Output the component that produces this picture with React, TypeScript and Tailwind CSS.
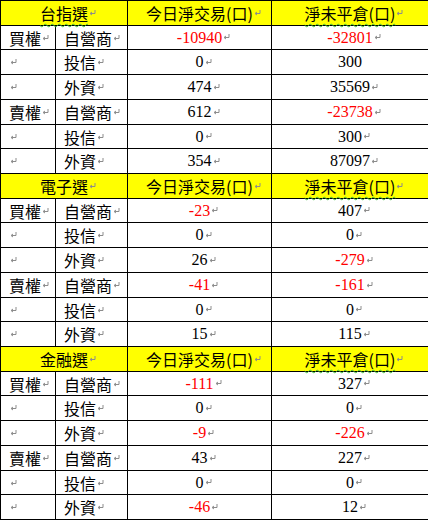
type Row = [string, string, string, string];

type Section = {
  title: string;
  squiggle?: boolean;
  rows: Row[];
};

const sections: Section[] = [
  {
    title: '台指選',
    squiggle: true,
    rows: [
      ['買權', '自營商', '-10940', '-32801'],
      ['', '投信', '0', '300'],
      ['', '外資', '474', '35569'],
      ['賣權', '自營商', '612', '-23738'],
      ['', '投信', '0', '300'],
      ['', '外資', '354', '87097'],
    ],
  },
  {
    title: '電子選',
    rows: [
      ['買權', '自營商', '-23', '407'],
      ['', '投信', '0', '0'],
      ['', '外資', '26', '-279'],
      ['賣權', '自營商', '-41', '-161'],
      ['', '投信', '0', '0'],
      ['', '外資', '15', '115'],
    ],
  },
  {
    title: '金融選',
    rows: [
      ['買權', '自營商', '-111', '327'],
      ['', '投信', '0', '0'],
      ['', '外資', '-9', '-226'],
      ['賣權', '自營商', '43', '227'],
      ['', '投信', '0', '0'],
      ['', '外資', '-46', '12'],
    ],
  },
];

// row pitch in the screenshot alternates 24/25px
const rowHeights = [25, 24, 25, 25, 25, 24, 25, 25, 24, 25, 25, 25, 24, 25, 25, 24, 25, 25, 25, 24, 25];

const cjk = "font-['Noto_Sans_CJK_TC','Noto_Sans_CJK_SC',sans-serif]";
const num = "font-['Liberation_Serif','Noto_Sans_CJK_TC',serif]";
const squiggle = 'underline decoration-wavy decoration-[#3cb83c] decoration-1 underline-offset-[3px]';

// Word paragraph mark
const Mark = () => (
  <svg width="7" height="6" viewBox="0 0 7 6" className="ml-px shrink-0">
    <path d="M6 0v3.5H1.5M3 2L1 3.5 3 5" fill="none" stroke="#8c8c8c" strokeWidth="1" />
  </svg>
);

// centred text; the mark hangs after it and is not counted in the centring
const Centered = ({ children, mark = true }: { children: React.ReactNode; mark?: boolean }) => (
  <span className="relative">
    {children}
    {mark && (
      <span className="absolute left-full top-0 flex h-full items-center">
        <Mark />
      </span>
    )}
  </span>
);

const rowClass = (h: number) => (h === 25 ? 'h-[25px]' : 'h-[24px]');

export default function App() {
  let idx = 0;

  return (
    <div className="w-[428px] h-[521px] bg-white">
      <table className="w-[428px] table-fixed border-collapse text-[16px] leading-[18px] text-black">
        <colgroup>
          <col className="w-[55px]" />
          <col className="w-[72px]" />
          <col className="w-[144px]" />
          <col className="w-[157px]" />
        </colgroup>
        <tbody>
          {sections.map((s) => {
            const headH = rowHeights[idx++];
            return [
              <tr key={s.title} className={`${rowClass(headH)} bg-[#ffff00]`}>
                <td colSpan={2} className={`border border-black p-0 text-center ${cjk}`}>
                  <Centered>
                    <span className={s.squiggle ? squiggle : ''}>{s.title}</span>
                  </Centered>
                </td>
                <td className={`border border-black p-0 text-center ${cjk}`}>
                  <Centered>今日淨交易(口)</Centered>
                </td>
                <td className={`border border-black p-0 text-center ${cjk}`}>
                  <Centered>
                    <span className={squiggle}>淨未平倉(口)</span>
                  </Centered>
                </td>
              </tr>,
              ...s.rows.map((r, i) => {
                const h = rowHeights[idx++];
                const noMark4 = s.title === '台指選' && i === 1;
                return (
                  <tr key={`${s.title}-${i}`} className={rowClass(h)}>
                    <td className={`border border-black p-0 pl-2 ${cjk}`}>
                      <div className="flex items-center">
                        {r[0]}
                        <Mark />
                      </div>
                    </td>
                    <td className={`border border-black p-0 pl-2 ${cjk}`}>
                      <div className="flex items-center">
                        {r[1]}
                        <Mark />
                      </div>
                    </td>
                    <td className={`border border-black p-0 text-center ${num}`}>
                      <Centered>
                        <span className={r[2].startsWith('-') ? 'text-[#ff0000]' : ''}>{r[2]}</span>
                      </Centered>
                    </td>
                    <td className={`border border-black p-0 text-center ${num}`}>
                      <Centered mark={!noMark4}>
                        <span className={r[3].startsWith('-') ? 'text-[#ff0000]' : ''}>{r[3]}</span>
                      </Centered>
                    </td>
                  </tr>
                );
              }),
            ];
          })}
        </tbody>
      </table>
    </div>
  );
}
